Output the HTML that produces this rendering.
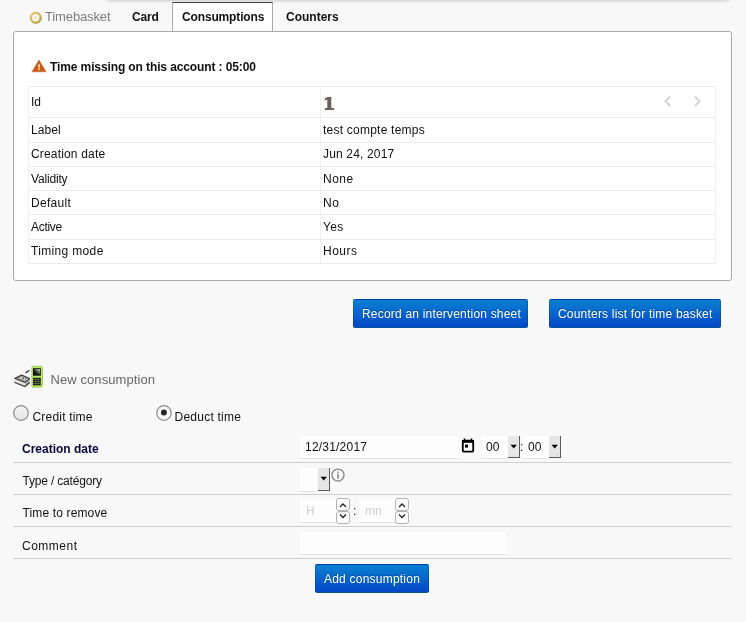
<!DOCTYPE html>
<html><head><meta charset="utf-8">
<style>
html,body{margin:0;padding:0;}
body{width:746px;height:622px;overflow:hidden;position:relative;background:#f8f8f8;font-family:"Liberation Sans",sans-serif;font-size:12px;color:#111;}
#wrap{position:absolute;left:0;top:0;width:746px;height:622px;will-change:transform;}
.a{position:absolute;white-space:nowrap;line-height:14px;}
#topshadow{position:absolute;left:106px;width:624px;top:-30px;height:30px;background:#f8f8f8;box-shadow:0 0 4px rgba(0,0,0,0.28);border-radius:4px;}
#tabact{position:absolute;left:172px;top:2px;width:99px;height:28px;background:#fff;border-left:1px solid #aaa;border-right:1px solid #aaa;border-top:1px solid #444;}
#box{position:absolute;left:13px;top:31px;width:717px;height:248px;background:#fff;border:1px solid #aaa;border-radius:3px;}
.tl{position:absolute;background:#ebebeb;}
.tv{position:absolute;background:#f0f0f0;}
.btn{position:absolute;box-sizing:border-box;border:1px solid rgba(0,0,0,0.15);border-bottom-color:rgba(0,0,0,0.3);border-radius:2px;background:linear-gradient(#0a80d2,#0548c8);}
.bt{color:#fff;text-shadow:0 -1px 0 rgba(0,0,0,0.25);}
.fl{position:absolute;left:13px;width:719px;height:1px;background:#cfcfcf;}
.inp{position:absolute;background:#fdfdfd;border-bottom:1px solid #e4e4e4;}
.sel{position:absolute;background:#e6e6e6;border-right:1px solid #5a5a5a;border-bottom:1px solid #5a5a5a;}
.spin{position:absolute;width:12px;height:11px;border:1px solid #b2b2b2;border-radius:3px;background:#fff;}
</style></head>
<body>
<div id="wrap">
<div id="topshadow"></div>
<svg style="position:absolute;left:29px;top:11px" width="14" height="14" viewBox="0 0 14 14">
  <defs><linearGradient id="gold" x1="0" y1="0" x2="1" y2="1"><stop offset="0" stop-color="#e8cf78"/><stop offset="0.6" stop-color="#d8b850"/><stop offset="1" stop-color="#a88a30"/></linearGradient></defs>
  <circle cx="6.8" cy="6.8" r="5.9" fill="url(#gold)"/>
  <circle cx="6.8" cy="6.8" r="5.6" fill="none" stroke="#b89540" stroke-width="0.6" opacity="0.7"/>
  <circle cx="6.7" cy="6.7" r="3.7" fill="#f6f3ec"/>
  <circle cx="6.4" cy="6.6" r="1.2" fill="#dfe3d0"/>
</svg>
<div class="a" style="left:45px;top:10px;letter-spacing:-0.13px;font-size:13px;color:#7c7c7c;">Timebasket</div>
<div class="a" style="left:132px;top:10px;letter-spacing:-0.2px;font-weight:bold;color:#111;">Card</div>
<div id="box"></div>
<div id="tabact"></div>
<div class="a" style="left:182px;top:10px;letter-spacing:-0.15px;font-weight:bold;color:#111;">Consumptions</div>
<div class="a" style="left:286px;top:10px;letter-spacing:0px;font-weight:bold;color:#111;">Counters</div>
<svg style="position:absolute;left:31px;top:59px" width="16" height="14" viewBox="0 0 16 14">
  <path d="M8 1 L15 12.8 L1 12.8 Z" fill="#cd5a18" stroke="#c45416" stroke-width="0.5" stroke-linejoin="round"/>
  <rect x="7.2" y="5.4" width="1.6" height="3.2" fill="#fdf0e0"/>
  <rect x="7.2" y="9.4" width="1.6" height="1.6" fill="#fdf0e0"/>
</svg>
<div class="a" style="left:50px;top:60px;letter-spacing:-0.11px;font-weight:bold;color:#111;">Time missing on this account : 05:00</div>
<div class="tl" style="left:28px;top:86px;width:688px;height:1px"></div>
<div class="tv" style="left:28px;top:86px;width:1px;height:178px"></div>
<div class="tv" style="left:715px;top:86px;width:1px;height:178px"></div>
<div class="tv" style="left:320px;top:86px;width:1px;height:178px"></div>
<div class="tl" style="left:28px;top:117px;width:688px;height:1px"></div>
<div class="tl" style="left:28px;top:142px;width:688px;height:1px"></div>
<div class="tl" style="left:28px;top:166px;width:688px;height:1px"></div>
<div class="tl" style="left:28px;top:190px;width:688px;height:1px"></div>
<div class="tl" style="left:28px;top:214px;width:688px;height:1px"></div>
<div class="tl" style="left:28px;top:239px;width:688px;height:1px"></div>
<div class="tl" style="left:28px;top:263px;width:688px;height:1px"></div>
<div class="a" style="left:31px;top:95px;letter-spacing:0px;">Id</div>
<div class="a" style="left:31px;top:123px;letter-spacing:0.1px;">Label</div>
<div class="a" style="left:323px;top:123px;letter-spacing:0.23px;">test compte temps</div>
<div class="a" style="left:31px;top:147px;letter-spacing:0.17px;">Creation date</div>
<div class="a" style="left:323px;top:147px;letter-spacing:0.16px;">Jun 24, 2017</div>
<div class="a" style="left:31px;top:172px;letter-spacing:-0.17px;">Validity</div>
<div class="a" style="left:323px;top:172px;letter-spacing:0.5px;">None</div>
<div class="a" style="left:31px;top:196px;letter-spacing:0.3px;">Default</div>
<div class="a" style="left:323px;top:196px;letter-spacing:0.5px;">No</div>
<div class="a" style="left:31px;top:220px;letter-spacing:-0.3px;">Active</div>
<div class="a" style="left:323px;top:220px;letter-spacing:0.3px;">Yes</div>
<div class="a" style="left:31px;top:244px;letter-spacing:0.34px;">Timing mode</div>
<div class="a" style="left:323px;top:244px;letter-spacing:0.5px;">Hours</div>
<svg style="position:absolute;left:320px;top:90px" width="20" height="24" viewBox="0 0 20 24">
  <path d="M7.3 6.9 H11.3 V18.1 H14.1 V20.1 H4.9 V18.1 H7.3 V9.6 L4.8 10.6 V8.4 Z" fill="#6a6060"/>
</svg>
<svg style="position:absolute;left:663px;top:95px" width="40" height="13" viewBox="0 0 40 13">
  <path d="M7 1.5 L2.5 6.3 L7 11" fill="none" stroke="#d4d4d4" stroke-width="2"/>
  <path d="M32 1.5 L36.5 6.3 L32 11" fill="none" stroke="#d4d4d4" stroke-width="2"/>
</svg>
<div class="btn" style="left:353px;top:299px;width:175px;height:29px"></div>
<div class="a bt" style="left:362px;top:307px;letter-spacing:0.2px;">Record an intervention sheet</div>
<div class="btn" style="left:549px;top:299px;width:172px;height:29px"></div>
<div class="a bt" style="left:558px;top:307px;letter-spacing:0.2px;">Counters list for time basket</div>
<svg style="position:absolute;left:12px;top:365px" width="34" height="25" viewBox="0 0 34 25">
  <defs><linearGradient id="scr" x1="0" y1="1" x2="1" y2="0"><stop offset="0.35" stop-color="#1a1a1a"/><stop offset="1" stop-color="#e8e8e8"/></linearGradient></defs>
  <path d="M2.9 13.4 L12.7 17.2 L13 21.6 L2.3 17.2 Z" fill="#e4e4de"/>
  <path d="M12.7 17.2 L17.4 13.7 L17.8 17.5 L13 21.6 Z" fill="#a8a8a0"/>
  <path d="M2.3 17.2 L13 21.6 L17.8 17.5" fill="none" stroke="#3a3a3a" stroke-width="1.1"/>
  <path d="M2.9 13.4 L9.7 10.1 L17.4 13.7 L12.7 17.2 Z" fill="#eeeee8" stroke="#404040" stroke-width="1.3" stroke-linejoin="round"/>
  <path d="M5.8 13.5 L9.8 11.7 L14.4 13.8 L12.2 15.5 Z" fill="#f8f8f4" stroke="#6a6a6a" stroke-width="0.8"/>
  <circle cx="10.8" cy="13.6" r="1" fill="#555"/>
  <path d="M13.5 7.8 L17.5 5.4" stroke="#444" stroke-width="1.4"/>
  <rect x="19.9" y="1.2" width="10.5" height="21" rx="1.5" fill="#bde86a" stroke="#8cc63e" stroke-width="0.8"/>
  <rect x="21" y="3.2" width="7.8" height="7.5" fill="#111"/>
  <rect x="22" y="4.1" width="5.9" height="5.6" fill="url(#scr)"/>
  <rect x="21" y="12.8" width="7.8" height="7.5" fill="#111"/>
  <path d="M23.6 12.8 V20.3 M26.2 12.8 V20.3 M21 14.7 H28.8 M21 16.6 H28.8 M21 18.5 H28.8" stroke="#7a8a58" stroke-width="0.6"/>
</svg>
<div class="a" style="left:50.5px;top:373px;letter-spacing:0.08px;font-size:13px;color:#666;">New consumption</div>
<svg style="position:absolute;left:12px;top:404px" width="18" height="18" viewBox="0 0 18 18">
  <defs><linearGradient id="rg" x1="0" y1="0" x2="0" y2="1"><stop offset="0" stop-color="#f4f4f4"/><stop offset="1" stop-color="#e6e6e6"/></linearGradient></defs>
  <circle cx="9" cy="9" r="7.3" fill="url(#rg)" stroke="#8c8c8c" stroke-width="1.2"/>
</svg>
<svg style="position:absolute;left:155px;top:404px" width="18" height="18" viewBox="0 0 18 18">
  <circle cx="9" cy="9" r="7.3" fill="#f6f6f6" stroke="#8c8c8c" stroke-width="1.2"/>
  <circle cx="8.9" cy="8.6" r="3" fill="#262626"/>
</svg>
<div class="a" style="left:32.5px;top:410px;letter-spacing:0.19px;">Credit time</div>
<div class="a" style="left:174.5px;top:410px;letter-spacing:0.24px;">Deduct time</div>
<div class="a" style="left:22px;top:442px;letter-spacing:0px;font-weight:bold;color:#07073e;">Creation date</div>
<div class="fl" style="top:462px"></div>
<div class="a" style="left:22.5px;top:474px;letter-spacing:-0.18px;">Type / catégory</div>
<div class="fl" style="top:494px"></div>
<div class="a" style="left:22.5px;top:506px;letter-spacing:0.14px;">Time to remove</div>
<div class="fl" style="top:526px"></div>
<div class="a" style="left:22px;top:539px;letter-spacing:0.5px;">Comment</div>
<div class="fl" style="top:558px"></div>
<div class="inp" style="left:300px;top:436px;width:158px;height:22px"></div>
<div class="a" style="left:305px;top:440px;letter-spacing:0.21px;">12/31/2017</div>
<svg style="position:absolute;left:461px;top:438px" width="14" height="15" viewBox="0 0 14 15">
  <path d="M3.5 0.4 V2.2 M10.5 0.4 V2.2" stroke="#000" stroke-width="1.6"/>
  <rect x="1.8" y="2.6" width="10.4" height="11.1" rx="1.3" fill="none" stroke="#000" stroke-width="1.8"/>
  <rect x="1" y="2" width="12" height="2.8" fill="#000"/>
  <rect x="4" y="6.6" width="3" height="3" fill="#000"/>
</svg>
<div class="inp" style="left:481px;top:436px;width:27px;height:22px"></div>
<div class="sel" style="left:508px;top:436px;width:11px;height:21px"></div>
<svg style="position:absolute;left:510px;top:444px" width="8" height="5" viewBox="0 0 8 5"><path d="M0.5 0.8 H6.9 L3.7 4.4 Z" fill="#000"/></svg>
<div class="a" style="left:486px;top:440px;letter-spacing:0px;">00</div>
<div class="a" style="left:520px;top:440px;letter-spacing:0px;">:</div>
<div class="inp" style="left:523px;top:436px;width:26px;height:22px"></div>
<div class="sel" style="left:549px;top:436px;width:11px;height:21px"></div>
<svg style="position:absolute;left:551px;top:444px" width="8" height="5" viewBox="0 0 8 5"><path d="M0.5 0.8 H6.9 L3.7 4.4 Z" fill="#000"/></svg>
<div class="a" style="left:528px;top:440px;letter-spacing:0px;">00</div>
<div class="inp" style="left:300px;top:468px;width:18px;height:23px"></div>
<div class="sel" style="left:318px;top:468px;width:11px;height:22px"></div>
<svg style="position:absolute;left:320px;top:476px" width="8" height="5" viewBox="0 0 8 5"><path d="M0.5 0.8 H6.9 L3.7 4.4 Z" fill="#000"/></svg>
<svg style="position:absolute;left:330px;top:468px" width="16" height="15" viewBox="0 0 16 15">
  <circle cx="8" cy="7.1" r="6" fill="none" stroke="#8a8a8a" stroke-width="1.4"/>
  <rect x="7.2" y="3.6" width="1.6" height="1.6" fill="#8a8a8a"/>
  <rect x="7.2" y="6" width="1.6" height="4.6" fill="#8a8a8a"/>
</svg>
<div class="inp" style="left:300px;top:499px;width:49px;height:23px"></div>
<div class="a" style="left:306px;top:504px;letter-spacing:0px;color:#cfcfcf;">H</div>
<div class="spin" style="left:336px;top:498px;"></div>
<div class="spin" style="left:336px;top:511px;"></div>
<svg style="position:absolute;left:339px;top:502px" width="8" height="18" viewBox="0 0 8 18">
  <path d="M1 5 L4 2 L7 5" fill="none" stroke="#222" stroke-width="1.25"/>
  <path d="M1 12.5 L4 15.5 L7 12.5" fill="none" stroke="#222" stroke-width="1.25"/>
</svg>
<div class="a" style="left:353px;top:504px;letter-spacing:0px;">:</div>
<div class="inp" style="left:359px;top:499px;width:51px;height:23px"></div>
<div class="a" style="left:365px;top:504px;letter-spacing:0px;color:#cfcfcf;">mn</div>
<div class="spin" style="left:395px;top:498px;"></div>
<div class="spin" style="left:395px;top:511px;"></div>
<svg style="position:absolute;left:398px;top:502px" width="8" height="18" viewBox="0 0 8 18">
  <path d="M1 5 L4 2 L7 5" fill="none" stroke="#222" stroke-width="1.25"/>
  <path d="M1 12.5 L4 15.5 L7 12.5" fill="none" stroke="#222" stroke-width="1.25"/>
</svg>
<div class="inp" style="left:300px;top:532px;width:206px;height:22px"></div>
<div class="btn" style="left:315px;top:564px;width:114px;height:29px"></div>
<div class="a bt" style="left:324px;top:572px;letter-spacing:0.22px;">Add consumption</div>
</div>
</body></html>
